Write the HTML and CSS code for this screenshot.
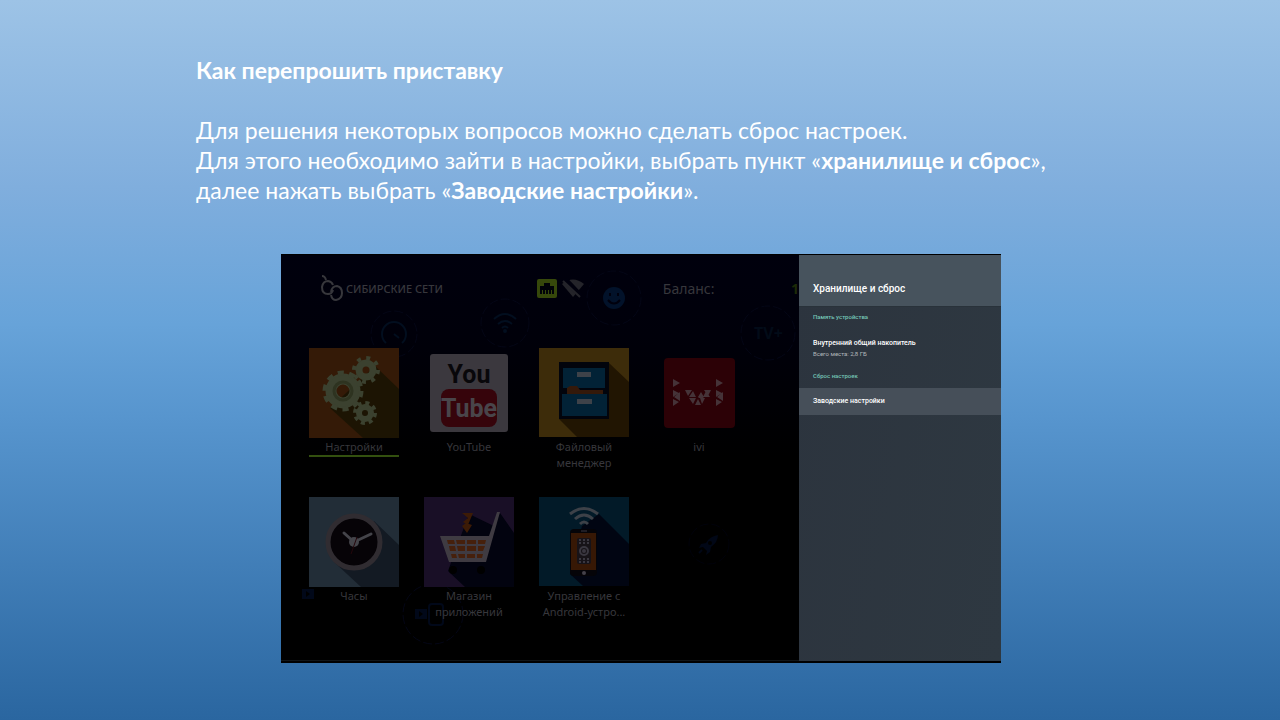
FILE: index.html
```html
<!DOCTYPE html>
<html lang="ru">
  <head>
    <meta charset="UTF-8" />
    <meta name="viewport" content="width=device-width, initial-scale=1.0" />
    <title>Как перепрошить приставку</title>
    <link rel="stylesheet" href="styles.css">
  </head>
  <body>
    <main class="slide">
      <h1>Как перепрошить приставку</h1>
      <p class="intro">
        Для решения некоторых вопросов можно сделать сброс настроек.<br>
        Для этого необходимо зайти в настройки, выбрать пункт «<b>хранилище и сброс</b>»,<br>
        далее нажать выбрать «<b>Заводские настройки</b>».
      </p>

      <section class="screen">
        <div class="home">
          <!-- background doodles -->
          <svg class="doodles" viewBox="0 0 518 409" width="518" height="409" fill="none" stroke="#020e1f" stroke-width="2" aria-hidden="true">
            <g stroke="#040616" stroke-width="1" stroke-dasharray="9 3">
              <circle cx="113" cy="79" r="23"/>
              <circle cx="224" cy="68" r="24"/>
              <circle cx="333" cy="43" r="27"/>
              <circle cx="487" cy="78" r="27"/>
              <circle cx="152" cy="359" r="30"/>
              <circle cx="428" cy="289" r="20" stroke="#01020b"/>
            </g>
            <path d="M105 88a12 12 0 1 1 16 0M113 79l5 4"/>
            <path d="M213 64q11-10 22 0M217 69q7-6 14 0M221 73q3-3 6 0"/>
            <circle cx="224" cy="76" r="1"/>
            <circle cx="333" cy="43" r="11" fill="#02122a" stroke="none"/>
            <path d="M327 45q6 7 12 0M329 38v3M337 38v3" stroke="#00000d"/>
            <rect x="21" y="334" width="12" height="10" fill="#010819" stroke="none"/>
            <path d="M25 336l4 3-4 3z" fill="#000" stroke="none"/>
            <rect x="134" y="354" width="12" height="10" fill="#010819" stroke="none"/>
            <path d="M138 356l4 3-4 3z" fill="#000" stroke="none"/>
            <rect x="148" y="349" width="14" height="21" rx="3" stroke="#010819"/>
            <path d="M437 280q-8 1-12 8l-5 1-2 4 4-1 4 4-1 4 4-3 1-5q7-5 7-12z" fill="#010716" stroke="none"/>
            <circle cx="429" cy="288" r="2" fill="#000" stroke="none"/>
            <path d="M421 295l-3 3" stroke="#010716"/>
            <text class="doodle-text" x="473" y="84">TV+</text>
          </svg>

          <header class="status">
            <div class="brand">
              <svg width="24" height="28" viewBox="0 0 24 28" fill="none" stroke="#37373c" stroke-width="2" aria-hidden="true">
                <path d="M13 10a6 6 0 0 0-5-4q-5 0-6 6 0 7 6 7 4 0 5-4"/>
                <path d="M11 17q1-6 6-6 5 1 5 7t-6 7q-4 0-5-5"/>
                <path d="M2 1q3 0 4 4"/>
              </svg>
              <span>СИБИРСКИЕ СЕТИ</span>
            </div>
            <div class="network">
              <svg width="20" height="20" viewBox="0 0 20 20" aria-hidden="true">
                <rect width="20" height="19" rx="2" fill="#36480b"/>
                <path d="M3 15V7h4V4h6v3h4v8h-2v-4h-1v4h-2v-4h-1v4H9v-4H8v4H6v-4H5v4z" fill="#000208"/>
              </svg>
              <svg width="24" height="20" viewBox="0 0 24 20" aria-hidden="true">
                <path d="M1 5q11-9 22 0L12 18z" fill="#24242a"/>
                <path d="M3-1l17 18" stroke="#00000d" stroke-width="5"/>
                <path d="M2 2l17 16" stroke="#24242a" stroke-width="2"/>
              </svg>
            </div>
            <span class="balance">Баланс:</span>
            <span class="amount">1</span>
          </header>

          <div class="apps">
            <button class="app selected">
              <svg viewBox="0 0 90 90" aria-hidden="true">
                <path fill="#341a07" d="M0 0h90v90H0z"/>
                <path fill="#1c1403" d="M66 18l24 23v49H54L21 60z"/>
                <g fill="none" stroke="#3b412f">
                  <circle cx="34" cy="43" r="12" stroke-width="11"/>
                  <circle cx="34" cy="43" r="18" stroke-width="5" stroke-dasharray="6 5.300"/>
                  <circle cx="57" cy="22" r="7" stroke-width="7"/>
                  <circle cx="57" cy="22" r="12" stroke-width="4" stroke-dasharray="4 5.400"/>
                  <circle cx="56" cy="65" r="6" stroke-width="6"/>
                  <circle cx="56" cy="65" r="10" stroke-width="4" stroke-dasharray="4 3.850"/>
                </g>
                <circle cx="34" cy="43" r="9" fill="none" stroke="#2e3320" stroke-width="3"/>
              </svg>
              <span>Настройки</span>
            </button>

            <button class="app">
              <svg viewBox="0 0 90 90" aria-hidden="true">
                <rect x="6" y="6" width="78" height="78" rx="3" fill="#3b383e"/>
                <rect x="17" y="41" width="56" height="38" rx="8" fill="#36040b"/>
                <g class="yt" text-anchor="middle">
                  <text x="45" y="35" fill="#08070a">You</text>
                  <text x="45" y="69" fill="#49454a">Tube</text>
                </g>
              </svg>
              <span>YouTube</span>
            </button>

            <button class="app">
              <svg viewBox="0 0 90 90" aria-hidden="true">
                <path fill="#3d2c0a" d="M0 0h90v89H0z"/>
                <path fill="#211502" d="M70 15l20 19v55H38L20 71z"/>
                <path fill="#02040c" d="M20 14h50v57H20z"/>
                <path fill="#022236" d="M24 20h42v20H24zM23 46h45v22H23z"/>
                <path fill="#34190a" d="M28 46v-6l3-2h7l3 4h23v4z"/>
                <path fill="#3e4249" d="M38 24h14v5H38zM38 51h15v5H38z"/>
              </svg>
              <span>Файловый менеджер</span>
            </button>

            <button class="app">
              <svg viewBox="0 0 90 90" aria-hidden="true">
                <rect x="10" y="10" width="71" height="70" rx="4" fill="#2c0106"/>
                <g fill="#453338">
                  <path d="M19 31l7 4-7 4zM19 42l6 3-6 4zM26 44v9l-6-4zM19 51l6 3-6 4z"/>
                  <path d="M62 31l7 4-7 4zM62 42l6 3-6 4zM69 44v9l-6-4zM62 51l6 3-6 4z"/>
                  <path d="M31 42h7l-4 6zM39 43l3 6h-7zM35 50h7l-3 6zM44 51l3 6h-6zM49 50h-4l-1-1 3-5 3 5zM46 50h5l-3 6zM52 43l4 6h-7zM50 42h7l-3 6z"/>
                </g>
              </svg>
              <span>ivi</span>
            </button>

            <button class="app">
              <svg viewBox="0 0 90 90" aria-hidden="true">
                <path fill="#222d37" d="M0 0h90v90H0z"/>
                <path fill="#131a23" d="M65 24l25 24v42H52L25 65z"/>
                <circle cx="45" cy="45" r="26" fill="#060307" stroke="#302c31" stroke-width="5"/>
                <path d="M35 36l10 9 17-8" fill="none" stroke="#44444a" stroke-width="3" stroke-linecap="round" stroke-linejoin="round"/>
                <circle cx="45" cy="45" r="5" fill="#44444a"/>
                <path d="M48 40l-6 17" stroke="#24060b"/>
              </svg>
              <span>Часы</span>
            </button>

            <button class="app">
              <svg viewBox="0 0 90 90" aria-hidden="true">
                <path fill="#190f26" d="M0 0h90v90H0z"/>
                <path fill="#02030f" d="M45 17l25 12 6-13 14 20v54H41L24 74l5-14z"/>
                <path fill="#3c1b06" d="M38 16h11l-5 12-5-3 5-4zM38 29l4-3 6 2-5 8z"/>
                <path fill="#3f3b42" d="M16 39h49l8-24h3L62 65H25z"/>
                <path fill="#46200c" d="M23 43h7l1 4h-7zM32 43h9v4h-8zM43 43h9v4h-9zM54 43h8l-1 4h-7zM25 49h6l1 5h-6zM33 49h8v5h-7zM43 49h9v5h-9zM54 49h7l-2 5h-5zM27 57h5l1 4h-5zM34 57h7v4h-6zM43 57h8v4h-8zM53 57h6l-1 4h-5z"/>
                <g fill="#000">
                  <circle cx="29" cy="73" r="4"/>
                  <circle cx="57" cy="73" r="4"/>
                </g>
              </svg>
              <span>Магазин приложений</span>
            </button>

            <button class="app">
              <svg viewBox="0 0 90 90" aria-hidden="true">
                <path fill="#021a28" d="M0 0h90v89H0z"/>
                <path fill="#010512" d="M60 17l30 30v42H44L31 77l12-48z"/>
                <path d="M31 17q14-11 28 0M36 22q9-8 18 0M41 27q4-4 8 0" fill="none" stroke="#3d4148" stroke-width="3"/>
                <rect x="31" y="32" width="27" height="47" rx="4" fill="#050408"/>
                <path fill="#371805" d="M32 36h25v37H32z"/>
                <rect x="38" y="41" width="14" height="26" rx="2" fill="#171318"/>
                <g fill="none" stroke="#3a3740" stroke-width="2">
                  <path d="M40 43h11M40 46h11M40 62h11M40 65h11" stroke-dasharray="2 2"/>
                  <circle cx="45" cy="54" r="4"/>
                  <path d="M42 34h6" stroke-width="1"/>
                </g>
                <circle cx="45" cy="54" r="2" fill="#3a3740"/>
                <circle cx="45" cy="76" r="2" fill="#45424a"/>
              </svg>
              <span>Управление с Android-устро...</span>
            </button>
          </div>
        </div>

        <aside class="panel">
          <h2>Хранилище и сброс</h2>
          <h3>Память устройства</h3>
          <button class="item">
            Внутренний общий накопитель
            <small>Всего места: 2,8 ГБ</small>
          </button>
          <h3>Сброс настроек</h3>
          <button class="item active">Заводские настройки</button>
        </aside>
      </section>
    </main>
  </body>
</html>
```

FILE: styles.css
```css
* {
  box-sizing: border-box;
}

body {
  margin: 0;
  min-height: 100vh;
  font-family: Lato, 'Open Sans', sans-serif;
  color: #fff;
  background: linear-gradient(#9dc3e6, #80aedd 26%, #67a3d9 45%, #5795ce 58%, #2a66a0);
}

.slide {
  padding: 55px 194px 56px 196px;
}

h1, .intro {
  margin: 0;
  font-size: 23px;
  line-height: 30px;
}

.intro {
  margin-top: 30px;
  white-space: nowrap;
}

.screen {
  display: flex;
  max-width: 720px;
  margin: 49px auto 0;
  background: #000;
  border-top: 1px solid #000;
  border-bottom: 2px solid #000;
}

.home {
  position: relative;
  flex: 1;
  padding: 0 0 39px 28px;
  overflow: hidden;
  color: #37373c;
  background: linear-gradient(#00000d, #00000a 20%, #000 50%);
  border-bottom: 1px solid #111518;
  font-family: 'Noto Sans', sans-serif;
}

.doodles {
  position: absolute;
  top: 0;
  left: 0;
}

.doodle-text {
  font: bold 16px 'Noto Sans', sans-serif;
  fill: #020b18;
  stroke: none;
}

.status {
  position: relative;
  display: flex;
  align-items: center;
  height: 93px;
  padding: 0 0 26px 11px;
}

.brand {
  display: flex;
  align-items: center;
  gap: 2px;
  width: 218px;
  font-size: 11px;
  font-weight: 500;
}

.network {
  display: flex;
  gap: 4px;
  width: 127px;
}

.balance {
  width: 129px;
  font-size: 14px;
}

.amount {
  color: #1c2a07;
  font-size: 14px;
  font-weight: bold;
}

.apps {
  position: relative;
  display: grid;
  grid-template-columns: repeat(4, 90px);
  grid-auto-rows: 124px;
  gap: 25px;
}

button {
  padding: 0;
  border: 0;
  background: none;
  color: inherit;
  font: inherit;
}

.app {
  display: flex;
  flex-direction: column;
  align-items: center;
  font-size: 11px;
  line-height: 16px;
}

.app svg {
  flex: none;
  width: 90px;
  height: 90px;
}

.app span {
  width: 100%;
  padding-top: 1px;
}

.selected span {
  border-bottom: 2px solid #33500f;
}

.yt {
  font: bold 25px Roboto, sans-serif;
}

.panel {
  width: 202px;
  background: linear-gradient(100deg, #2c343e, #2e3841);
  font-family: Roboto, sans-serif;
}

h2, h3 {
  margin: 0;
  padding: 0 14px;
}

h2 {
  height: 52px;
  margin-bottom: 3px;
  padding-top: 26px;
  background: #47535d;
  border-bottom: 1px solid #29323a;
  font-size: 10px;
  font-weight: 500;
  line-height: 16px;
}

h3 {
  color: #74c5b6;
  font-size: 6px;
  font-weight: 500;
  line-height: 14px;
}

.item {
  display: block;
  width: 100%;
  padding: 14px 14px 11px;
  font-size: 7px;
  font-weight: 500;
  line-height: 11px;
  text-align: left;
}

.item small {
  display: block;
  color: #b4b9bd;
  font-size: 6px;
  font-weight: 400;
  line-height: 9px;
}

.active {
  margin-top: 5px;
  padding: 8px 14px;
  background: #464f59;
}
```
